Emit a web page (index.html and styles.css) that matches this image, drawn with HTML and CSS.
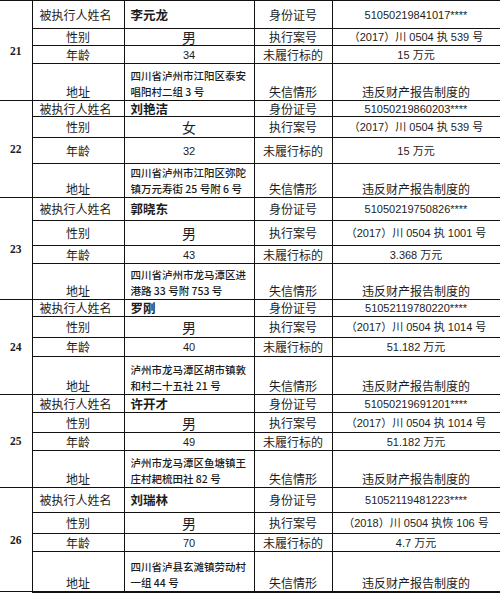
FILE: index.html
```html
<!DOCTYPE html>
<html lang="zh">
<head>
<meta charset="utf-8">
<link rel="stylesheet" href="styles.css">
</head>
<body>
<table class="sheet">
  <colgroup>
    <col class="c-num"><col class="c-lab"><col class="c-val"><col class="c-lab2"><col class="c-val2">
  </colgroup>
  <tbody class="blk first">
    <tr class="h28"><td class="num" rowspan="4">21</td><td class="lab-l">被执行人姓名</td><td class="name">李元龙</td><td class="lab">身份证号</td><td class="mono">51050219841017****</td></tr>
    <tr class="h17"><td class="lab">性别</td><td class="sex">男</td><td class="lab">执行案号</td><td class="mono">（2017）川 0504 执 539 号</td></tr>
    <tr class="h18"><td class="lab">年龄</td><td class="mono">34</td><td class="lab">未履行标的</td><td class="mono">15 万元</td></tr>
    <tr class="h37 addr-row"><td class="lab">地址</td><td class="addr">四川省泸州市江阳区泰安<br>唱阳村二组 3 号</td><td class="lab">失信情形</td><td class="reason">违反财产报告制度的</td></tr>
  </tbody>
  <tbody class="blk">
    <tr class="h16"><td class="num" rowspan="4">22</td><td class="lab-l">被执行人姓名</td><td class="name">刘艳洁</td><td class="lab">身份证号</td><td class="mono">51050219860203****</td></tr>
    <tr class="h21"><td class="lab">性别</td><td class="sex">女</td><td class="lab">执行案号</td><td class="mono">（2017）川 0504 执 539 号</td></tr>
    <tr class="h26"><td class="lab">年龄</td><td class="mono">32</td><td class="lab">未履行标的</td><td class="mono">15 万元</td></tr>
    <tr class="h34 addr-row"><td class="lab">地址</td><td class="addr">四川省泸州市江阳区弥陀<br>镇万元寿街 25 号附 6 号</td><td class="lab">失信情形</td><td class="reason">违反财产报告制度的</td></tr>
  </tbody>
  <tbody class="blk">
    <tr class="h23"><td class="num" rowspan="4">23</td><td class="lab-l">被执行人姓名</td><td class="name">郭晓东</td><td class="lab">身份证号</td><td class="mono">51050219750826****</td></tr>
    <tr class="h25"><td class="lab">性别</td><td class="sex">男</td><td class="lab">执行案号</td><td class="mono">（2017）川 0504 执 1001 号</td></tr>
    <tr class="h18"><td class="lab">年龄</td><td class="mono">43</td><td class="lab">未履行标的</td><td class="mono">3.368 万元</td></tr>
    <tr class="h36 addr-row"><td class="lab">地址</td><td class="addr">四川省泸州市龙马潭区进<br>港路 33 号附 753 号</td><td class="lab">失信情形</td><td class="reason">违反财产报告制度的</td></tr>
  </tbody>
  <tbody class="blk">
    <tr class="h17"><td class="num" rowspan="4">24</td><td class="lab-l">被执行人姓名</td><td class="name">罗刚</td><td class="lab">身份证号</td><td class="mono">51052119780220****</td></tr>
    <tr class="h21"><td class="lab">性别</td><td class="sex">男</td><td class="lab">执行案号</td><td class="mono">（2017）川 0504 执 1014 号</td></tr>
    <tr class="h19"><td class="lab">年龄</td><td class="mono">40</td><td class="lab">未履行标的</td><td class="mono">51.182 万元</td></tr>
    <tr class="h38 addr-row"><td class="lab">地址</td><td class="addr">泸州市龙马潭区胡市镇敦<br>和村二十五社 21 号</td><td class="lab">失信情形</td><td class="reason">违反财产报告制度的</td></tr>
  </tbody>
  <tbody class="blk">
    <tr class="h18"><td class="num" rowspan="4">25</td><td class="lab-l">被执行人姓名</td><td class="name">许开才</td><td class="lab">身份证号</td><td class="mono">51050219691201****</td></tr>
    <tr class="h20"><td class="lab">性别</td><td class="sex">男</td><td class="lab">执行案号</td><td class="mono">（2017）川 0504 执 1014 号</td></tr>
    <tr class="h18"><td class="lab">年龄</td><td class="mono">49</td><td class="lab">未履行标的</td><td class="mono">51.182 万元</td></tr>
    <tr class="h37 addr-row"><td class="lab">地址</td><td class="addr">泸州市龙马潭区鱼塘镇王<br>庄村耙梳田社 82 号</td><td class="lab">失信情形</td><td class="reason">违反财产报告制度的</td></tr>
  </tbody>
  <tbody class="blk last">
    <tr class="h25"><td class="num" rowspan="4">26</td><td class="lab-l">被执行人姓名</td><td class="name">刘瑞林</td><td class="lab">身份证号</td><td class="mono">51052119481223****</td></tr>
    <tr class="h21"><td class="lab">性别</td><td class="sex">男</td><td class="lab">执行案号</td><td class="mono">（2018）川 0504 执恢 106 号</td></tr>
    <tr class="h18"><td class="lab">年龄</td><td class="mono">70</td><td class="lab">未履行标的</td><td class="mono">4.7 万元</td></tr>
    <tr class="h40 addr-row"><td class="lab">地址</td><td class="addr">四川省泸县玄滩镇劳动村<br>一组 44 号</td><td class="lab">失信情形</td><td class="reason">违反财产报告制度的</td></tr>
  </tbody>
</table>
</body>
</html>
```

FILE: styles.css
```css
html, body {
  margin: 0;
  padding: 0;
  background: #ffffff;
}

body {
  font-family: "Noto Sans CJK SC", "Liberation Sans", sans-serif;
  color: #1c1c1c;
}

.sheet {
  border-collapse: collapse;
  table-layout: fixed;
  width: 500px;
}

.c-num { width: 32px; }
.c-lab { width: 92px; }
.c-val { width: 130px; }
.c-lab2 { width: 78px; }
.c-val2 { width: 168px; }

.sheet td {
  border: 1px solid #111;
  padding: 0 2px;
  font-size: 12px;
  line-height: 12px;
  text-align: center;
  vertical-align: middle;
  white-space: nowrap;
}

.sheet td.num {
  border-left: none;
  font-family: "Liberation Serif", serif;
  font-weight: bold;
  font-size: 11.5px;
  padding: 0;
}

.blk { border-top: 1px solid #111; }
.blk.first td { border-top: 1px solid #111; }
.blk.first td.num { border-top: 1px dotted #bbb; }
.blk.last tr:last-child td { border-bottom: 2px solid #111; }

.sheet td.lab-l {
  text-align: left;
  padding-left: 7px;
}

.sheet td.name {
  text-align: left;
  padding-left: 6px;
  font-weight: bold;
  font-size: 12.5px;
}

.sheet td.sex {
  font-size: 14px;
}

.sheet td.mono {
  font-family: "Liberation Sans", "Noto Sans CJK SC", sans-serif;
  font-size: 11px;
}

.addr-row td {
  vertical-align: bottom;
  padding-bottom: 2px;
}

.sheet td.addr {
  text-align: left;
  padding-left: 6px;
  padding-bottom: 0;
  font-size: 10.5px;
  line-height: 16px;
  font-weight: 500;
}

.sheet td.reason {
  font-size: 12px;
}

.h16 { height: 16px; }
.h17 { height: 17px; }
.h18 { height: 18px; }
.h19 { height: 19px; }
.h20 { height: 20px; }
.h21 { height: 21px; }
.h23 { height: 23px; }
.h25 { height: 25px; }
.h26 { height: 26px; }
.h28 { height: 28px; }
.h34 { height: 34px; }
.h36 { height: 36px; }
.h37 { height: 37px; }
.h38 { height: 38px; }
.h40 { height: 40px; }
```
